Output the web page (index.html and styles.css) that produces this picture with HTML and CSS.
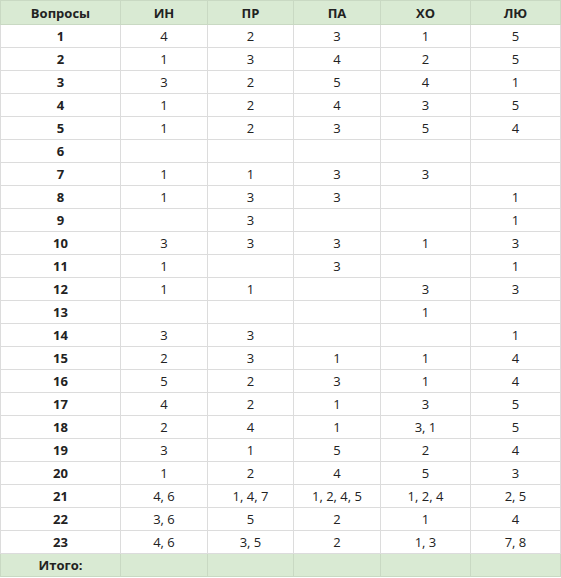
FILE: index.html
```html
<!DOCTYPE html>
<html lang="ru">
<head>
<meta charset="utf-8">
<link rel="stylesheet" href="styles.css">
</head>
<body>
<table class="grid">
  <colgroup>
    <col class="c-q"><col class="c-a"><col class="c-b"><col class="c-c"><col class="c-d"><col class="c-e">
  </colgroup>
  <thead>
    <tr class="head"><th>Вопросы</th><th>ИН</th><th>ПР</th><th>ПА</th><th>ХО</th><th>ЛЮ</th></tr>
  </thead>
  <tbody>
    <tr><th>1</th><td>4</td><td>2</td><td>3</td><td>1</td><td>5</td></tr>
    <tr><th>2</th><td>1</td><td>3</td><td>4</td><td>2</td><td>5</td></tr>
    <tr><th>3</th><td>3</td><td>2</td><td>5</td><td>4</td><td>1</td></tr>
    <tr><th>4</th><td>1</td><td>2</td><td>4</td><td>3</td><td>5</td></tr>
    <tr><th>5</th><td>1</td><td>2</td><td>3</td><td>5</td><td>4</td></tr>
    <tr><th>6</th><td></td><td></td><td></td><td></td><td></td></tr>
    <tr><th>7</th><td>1</td><td>1</td><td>3</td><td>3</td><td></td></tr>
    <tr><th>8</th><td>1</td><td>3</td><td>3</td><td></td><td>1</td></tr>
    <tr><th>9</th><td></td><td>3</td><td></td><td></td><td>1</td></tr>
    <tr><th>10</th><td>3</td><td>3</td><td>3</td><td>1</td><td>3</td></tr>
    <tr><th>11</th><td>1</td><td></td><td>3</td><td></td><td>1</td></tr>
    <tr><th>12</th><td>1</td><td>1</td><td></td><td>3</td><td>3</td></tr>
    <tr><th>13</th><td></td><td></td><td></td><td>1</td><td></td></tr>
    <tr><th>14</th><td>3</td><td>3</td><td></td><td></td><td>1</td></tr>
    <tr><th>15</th><td>2</td><td>3</td><td>1</td><td>1</td><td>4</td></tr>
    <tr><th>16</th><td>5</td><td>2</td><td>3</td><td>1</td><td>4</td></tr>
    <tr><th>17</th><td>4</td><td>2</td><td>1</td><td>3</td><td>5</td></tr>
    <tr><th>18</th><td>2</td><td>4</td><td>1</td><td>3, 1</td><td>5</td></tr>
    <tr><th>19</th><td>3</td><td>1</td><td>5</td><td>2</td><td>4</td></tr>
    <tr><th>20</th><td>1</td><td>2</td><td>4</td><td>5</td><td>3</td></tr>
    <tr><th>21</th><td>4, 6</td><td>1, 4, 7</td><td>1, 2, 4, 5</td><td>1, 2, 4</td><td>2, 5</td></tr>
    <tr><th>22</th><td>3, 6</td><td>5</td><td>2</td><td>1</td><td>4</td></tr>
    <tr><th>23</th><td>4, 6</td><td>3, 5</td><td>2</td><td>1, 3</td><td>7, 8</td></tr>
  </tbody>
  <tfoot>
    <tr class="total"><th>Итого:</th><td></td><td></td><td></td><td></td><td></td></tr>
  </tfoot>
</table>
</body>
</html>
```
FILE: styles.css
```css
html, body {
  margin: 0;
  padding: 0;
  background: #ffffff;
}

.grid {
  border-collapse: collapse;
  table-layout: fixed;
  width: 560px;
  font-family: "Open Sans", "Noto Sans", sans-serif;
  font-size: 13px;
  color: #222222;
}

.c-q { width: 120px; }
.c-a { width: 87px; }
.c-b { width: 86px; }
.c-c { width: 87px; }
.c-d { width: 90px; }
.c-e { width: 90px; }

.grid th,
.grid td {
  border: 1px solid #dcdcdc;
  height: 22px;
  padding: 0;
  text-align: center;
  vertical-align: middle;
  line-height: 16px;
}

.grid th {
  font-weight: 700;
}

.grid td {
  font-weight: 400;
}

.head th,
.total th,
.total td {
  background: #d9ead3;
  border-color: #c9d9c3;
}

.head th {
  height: 23px;
}
```
